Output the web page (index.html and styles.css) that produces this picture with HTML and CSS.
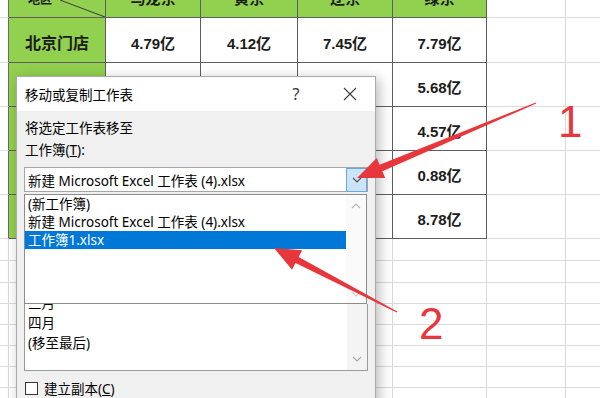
FILE: index.html
```html
<!DOCTYPE html>
<html lang="zh-CN">

<head>
    <meta charset="UTF-8">
    <meta name="viewport" content="width=device-width, initial-scale=1.0">
    <title>移动或复制工作表</title>
    <link rel="stylesheet" href="styles.css">
</head>

<body>

    <div class="screen">

        <!-- worksheet behind the dialog -->
        <div class="sheet">
            <!-- header row (top is scrolled off) -->
            <div class="c edge"></div>
            <div class="c t g hd corner">
                <span class="cut small">地区</span>
                <svg class="diag" width="97" height="18" viewBox="0 0 97 18"><line x1="51" y1="0" x2="96" y2="17" stroke="#3a3a3a" stroke-width="1"/></svg>
            </div>
            <div class="c t g hd"><span class="cut">马龙东</span></div>
            <div class="c t g hd"><span class="cut">黄东</span></div>
            <div class="c t g hd"><span class="cut">辽东</span></div>
            <div class="c t g hd"><span class="cut">绿东</span></div>
            <div class="c"></div>
            <div class="c"></div>

            <div class="c edge"></div>
            <div class="c t g store">北京门店</div>
            <div class="c t num">4.79亿</div>
            <div class="c t num">4.12亿</div>
            <div class="c t num">7.45亿</div>
            <div class="c t num">7.79亿</div>
            <div class="c"></div>
            <div class="c"></div>

            <!-- rows below are mostly under the dialog -->
            <div class="c edge"></div>
            <div class="c t g"></div>
            <div class="c t"></div>
            <div class="c t"></div>
            <div class="c t"></div>
            <div class="c t num">5.68亿</div>
            <div class="c"></div>
            <div class="c"></div>

            <div class="c edge"></div>
            <div class="c t g"></div>
            <div class="c t"></div>
            <div class="c t"></div>
            <div class="c t"></div>
            <div class="c t num">4.57亿</div>
            <div class="c"></div>
            <div class="c"></div>

            <div class="c edge"></div>
            <div class="c t g"></div>
            <div class="c t"></div>
            <div class="c t"></div>
            <div class="c t"></div>
            <div class="c t num">0.88亿</div>
            <div class="c"></div>
            <div class="c"></div>

            <div class="c edge"></div>
            <div class="c t g"></div>
            <div class="c t"></div>
            <div class="c t"></div>
            <div class="c t"></div>
            <div class="c t num">8.78亿</div>
            <div class="c"></div>
            <div class="c"></div>

            <!-- empty rows -->
            <div class="c"></div><div class="c"></div><div class="c"></div><div class="c"></div><div class="c"></div><div class="c"></div><div class="c"></div><div class="c"></div>
            <div class="c"></div><div class="c"></div><div class="c"></div><div class="c"></div><div class="c"></div><div class="c"></div><div class="c"></div><div class="c"></div>
            <div class="c"></div><div class="c"></div><div class="c"></div><div class="c"></div><div class="c"></div><div class="c"></div><div class="c"></div><div class="c"></div>
            <div class="c"></div><div class="c"></div><div class="c"></div><div class="c"></div><div class="c"></div><div class="c"></div><div class="c"></div><div class="c"></div>
            <div class="c"></div><div class="c"></div><div class="c"></div><div class="c"></div><div class="c"></div><div class="c"></div><div class="c"></div><div class="c"></div>
            <div class="c"></div><div class="c"></div><div class="c"></div><div class="c"></div><div class="c"></div><div class="c"></div><div class="c"></div><div class="c"></div>
            <div class="c"></div><div class="c"></div><div class="c"></div><div class="c"></div><div class="c"></div><div class="c"></div><div class="c"></div><div class="c"></div>
            <div class="c"></div><div class="c"></div><div class="c"></div><div class="c"></div><div class="c"></div><div class="c"></div><div class="c"></div><div class="c"></div>
        </div>

        <!-- move or copy dialog -->
        <div class="dialog">
            <div class="titlebar">
                <span class="title">移动或复制工作表</span>
                <span class="help">?</span>
                <span class="close">
                    <svg width="14" height="14" viewBox="0 0 14 14"><path d="M1 1L13 13M13 1L1 13" stroke="#3c3c3c" stroke-width="1.1" fill="none"/></svg>
                </span>
            </div>

            <div class="dialog-body">
                <div class="label first">将选定工作表移至</div>
                <div class="label">工作簿(<u>T</u>):</div>

                <div class="combo">
                    <span class="combo-text">新建 Microsoft Excel 工作表 (4).xlsx</span>
                    <span class="combo-btn">
                        <svg width="10" height="6" viewBox="0 0 10 6"><path d="M1 1L5 5L9 1" stroke="#505050" stroke-width="1.1" fill="none"/></svg>
                    </span>
                </div>

                <!-- open dropdown of the workbook combo -->
                <div class="popup">
                    <ul class="items">
                        <li>(新工作簿)</li>
                        <li>新建 Microsoft Excel 工作表 (4).xlsx</li>
                        <li class="selected">工作簿1.xlsx</li>
                    </ul>
                    <div class="scroll">
                        <svg width="10" height="6" viewBox="0 0 10 6"><path d="M1 5L5 1L9 5" stroke="#b5b5b5" stroke-width="1.1" fill="none"/></svg>
                        <svg width="10" height="6" viewBox="0 0 10 6"><path d="M1 1L5 5L9 1" stroke="#d0d0d0" stroke-width="1.1" fill="none"/></svg>
                    </div>
                </div>

                <!-- sheet list, its upper part hidden by the dropdown -->
                <div class="listbox">
                    <ul class="items">
                        <li>三月</li>
                        <li>四月</li>
                        <li>(移至最后)</li>
                    </ul>
                    <div class="scroll">
                        <svg width="10" height="6" viewBox="0 0 10 6"><path d="M1 1L5 5L9 1" stroke="#a8a8a8" stroke-width="1.1" fill="none"/></svg>
                    </div>
                </div>

                <div class="copy">
                    <span class="check"></span>
                    <span>建立副本(<u>C</u>)</span>
                </div>
            </div>
        </div>

        <!-- red annotations -->
        <svg class="marks" width="600" height="398" viewBox="0 0 600 398">
            <polygon fill="#e8363d" points="536.2,103.6 382.4,171.2 385.2,178.1 357,178 376.8,157.9 379.6,164.8 535.8,102.4"/>
            <polygon fill="#e8363d" points="397.3,311.5 298.7,256.9 302.2,250.2 274,248 292,269.8 295.5,263.1 396.7,312.5"/>
            <text x="558" y="137" class="num-mark">1</text>
            <text x="419" y="339" class="num-mark">2</text>
        </svg>

    </div>

</body>

</html>
```

FILE: styles.css
```css
* {
    box-sizing: border-box;
}

body {
    margin: 0;
    background-color: #fff;
    font-family: "Noto Sans CJK SC", sans-serif;
    color: #000;
}

.screen {
    position: relative;
    width: 600px;
    height: 398px;
    overflow: hidden;
}

/* worksheet */
.sheet {
    display: grid;
    grid-template-columns: 9px 97px 95px 97px 95px 94px 79px 60px;
    grid-template-rows: 18px 45px 44px 44px 44px 44px 22px 22px 21px 21px 21px 21px 21px 21px;
}

.c {
    border-right: 1px solid #dadada;
    border-bottom: 1px solid #dadada;
    display: flex;
    align-items: center;
    justify-content: center;
    overflow: hidden;
    color: #1c1c1c;
}

.c.edge {
    border-right-color: #6a6a6a;
}

.c.t {
    border-color: #5e5e5e;
}

.c.g {
    background-color: #92d050;
}

.c.hd {
    align-items: flex-start;
    font-weight: bold;
    font-size: 15px;
}

.cut {
    line-height: 16px;
    margin-top: -10px;
}

.corner {
    position: relative;
    justify-content: flex-start;
}

.cut.small {
    font-size: 12px;
    margin-left: 19px;
    margin-top: -9px;
}

.diag {
    position: absolute;
    left: 0;
    top: 0;
}

.store {
    font-size: 16px;
    font-weight: bold;
    padding-top: 4px;
}

.num {
    font-family: "Liberation Sans", "Noto Sans CJK SC", sans-serif;
    font-size: 15px;
    font-weight: bold;
    padding-top: 4px;
}

/* dialog */
.dialog {
    position: absolute;
    left: 16px;
    top: 76px;
    width: 360px;
    height: 340px;
    background-color: #f0f0f0;
    border: 1px solid #a9a9a9;
    box-shadow: 3px 3px 12px rgba(0, 0, 0, 0.28);
    font-family: "Noto Sans", "Noto Sans CJK SC", sans-serif;
    font-size: 13.5px;
}

.titlebar {
    height: 34px;
    background-color: #fff;
    display: flex;
    align-items: center;
    padding-left: 8px;
}

.title {
    flex: 1;
}

.help {
    width: 30px;
    text-align: center;
    font-size: 16px;
    color: #333;
}

.close {
    width: 30px;
    margin-left: 24px;
    margin-right: 10px;
    display: flex;
    justify-content: center;
}

.dialog-body {
    padding: 0 7px;
}

.label {
    line-height: 18px;
    padding-left: 1px;
    margin-top: 4px;
}

.label.first {
    margin-top: 8px;
}

.combo {
    margin-top: 8px;
    height: 25px;
    background-color: #fff;
    border: 1px solid #a5a5a5;
    display: flex;
    align-items: center;
}

.combo-text {
    flex: 1;
    padding-left: 3px;
    white-space: nowrap;
}

.combo-btn {
    width: 21px;
    height: 24px;
    margin-top: -1px;
    margin-bottom: -1px;
    background-color: #cce4f7;
    border: 1px solid #6aa8e0;
    display: flex;
    align-items: center;
    justify-content: center;
}

.items {
    flex: 1;
    list-style: none;
    margin: 0;
    padding: 0;
}

.scroll {
    width: 20px;
    display: flex;
    flex-direction: column;
    justify-content: space-between;
    align-items: center;
}

.popup {
    margin-top: 2px;
    margin-right: 1px;
    height: 110px;
    background-color: #fff;
    border: 1px solid #8c8c8c;
    display: flex;
}

.popup .items li {
    line-height: 18px;
    padding-left: 3px;
    white-space: nowrap;
}

.popup .items li.selected {
    background-color: #0078d7;
    color: #fff;
}

.popup .scroll {
    background-color: #fafafa;
    padding: 8px 0 6px;
}

.listbox {
    height: 67px;
    background-color: #fff;
    border: 1px solid #9a9a9a;
    border-top: none;
    display: flex;
    overflow: hidden;
}

.listbox .items {
    margin-top: -11px;
}

.listbox .items li {
    line-height: 20px;
    padding-left: 3px;
}

.listbox .scroll {
    background-color: #f4f4f4;
    justify-content: flex-end;
    padding-bottom: 8px;
}

.copy {
    margin-top: 10px;
    display: flex;
    align-items: center;
    height: 14px;
    gap: 6px;
    padding-left: 1px;
}

.check {
    width: 13px;
    height: 13px;
    background-color: #fff;
    border: 1px solid #333;
}

/* annotations */
.marks {
    position: absolute;
    left: 0;
    top: 0;
    pointer-events: none;
}

.num-mark {
    font-family: "Liberation Sans", sans-serif;
    font-size: 44px;
    fill: #e8363d;
}
```
